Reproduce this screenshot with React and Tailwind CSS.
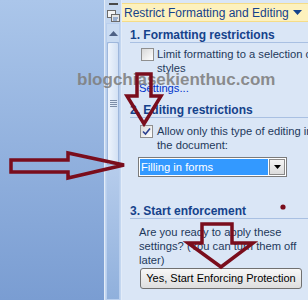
import React from 'react';

const font = { fontFamily: '"Liberation Sans", Arial, sans-serif' };

function Box({ checked }) {
  return (
    <div className="w-[13px] h-[13px] shrink-0 border border-[#8f8f8f] bg-gradient-to-br from-[#d8d8d8] to-white flex items-center justify-center">
      {checked && (
        <svg width="9" height="9" viewBox="0 0 9 9">
          <path d="M1 4.5 L3.5 7 L8 1.5" fill="none" stroke="#2a3f8f" strokeWidth="1.6" />
        </svg>
      )}
    </div>
  );
}

function Heading({ children }) {
  return (
    <div className="h-[15px] leading-[14px] border-b border-[#a9c0e2] text-[12px] font-bold text-[#15428b] whitespace-nowrap">
      {children}
    </div>
  );
}

function Scrollbar() {
  return (
    <div className="w-[18px] shrink-0 flex flex-col bg-[#c4d7f0] border-l border-[#e3ecf8] border-r border-[#7f9fcf]">
      <div className="h-[23px] flex flex-col items-center pt-[3px]">
        <div className="w-[9px] h-[2px] bg-[#4a4a4a]" />
        <svg width="13" height="12" viewBox="0 0 13 12" className="mt-[5px]">
          <rect x="0.5" y="0.5" width="8" height="7" fill="#f4f4f4" stroke="#6b6b6b" />
          <rect x="4.5" y="4.5" width="8" height="7" fill="#e6e6e6" stroke="#6b6b6b" />
          <path d="M6 8 L11 8 M6 10 L10 10" stroke="#4c78b8" />
        </svg>
      </div>
      <div className="flex-1 flex flex-col mx-[1px] bg-[#a8c2e6] border border-[#b9cfee]">
        <div className="h-[18px] flex items-center justify-center bg-[#c9dbf2]">
          <svg width="9" height="5" viewBox="0 0 9 5"><path d="M0 5 L4.5 0 L9 5 Z" fill="#4d6185" /></svg>
        </div>
        <div className="h-[123px] bg-gradient-to-r from-[#eef4fc] to-[#d3e1f4] border border-[#9eb7dc] rounded-[2px] flex flex-col items-center justify-center gap-[1px]">
          <div className="w-[7px] h-[1px] bg-[#7d8ea8]" />
          <div className="w-[7px] h-[1px] bg-[#7d8ea8]" />
          <div className="w-[7px] h-[1px] bg-[#7d8ea8]" />
          <div className="w-[7px] h-[1px] bg-[#7d8ea8]" />
        </div>
        <div className="flex-1 bg-gradient-to-b from-[#b7cdec] to-[#90b0dc]" />
      </div>
    </div>
  );
}

function Arrows() {
  const red = '#7a0d1c';
  return (
    <svg className="absolute inset-0 pointer-events-none" width="308" height="300" viewBox="0 0 308 300">
      <polygon points="137,74 151,74 151,96 161,96 144,124 127,96 137,96" fill="none" stroke={red} strokeWidth="3.5" strokeLinejoin="miter" />
      <polygon points="11,160 68,160 68,153 124,165 68,178 68,172 11,172" fill="none" stroke={red} strokeWidth="3.5" strokeLinejoin="miter" />
      <polygon points="202,224 232,224 232,243 253,243 221,267 188,243 202,243" fill="none" stroke={red} strokeWidth="3.5" strokeLinejoin="miter" />
      <circle cx="283" cy="207" r="2.6" fill={red} />
    </svg>
  );
}

export default function App() {
  return (
    <div className="relative w-[308px] h-[300px] overflow-hidden flex text-[#1e395b]" style={font}>
      <div className="w-[104px] shrink-0 bg-gradient-to-b from-[#abc6ea] to-[#7a9dd2]" />
      <Scrollbar />

      <div className="flex-1 bg-[#dae6f6] flex flex-col">
        <div className="mt-[3px] h-[19px] bg-[#fdf1bd] border-y border-[#f5dc88] flex items-center pl-[2px]">
          <div className="w-[166px] overflow-hidden whitespace-nowrap text-[12px] text-[#15428b]">
            Restrict Formatting and Editing
          </div>
          <svg width="9" height="5" viewBox="0 0 9 5" className="ml-[3px]"><path d="M0 0 L9 0 L4.5 5 Z" fill="#15428b" /></svg>
        </div>

        <div className="pl-[8px] flex flex-col">
          <div className="mt-[6px]"><Heading>1. Formatting restrictions</Heading></div>
          <div className="mt-[5px] ml-[11px] flex gap-[3px] text-[11.2px] leading-[14px] whitespace-nowrap">
            <Box />
            <div className="-mt-[1px]">Limit formatting to a selection of<br />styles</div>
          </div>
          <div className="mt-[6px] ml-[9px] text-[11.2px] leading-[14px] text-[#0033cc]">Settings...</div>

          <div className="mt-[8px]"><Heading>2. Editing restrictions</Heading></div>
          <div className="mt-[7px] ml-[10px] flex gap-[4px] text-[11.2px] leading-[14px] whitespace-nowrap">
            <Box checked />
            <div className="-mt-[1px]">Allow only this type of editing in<br />the document:</div>
          </div>
          <div className="mt-[5px] ml-[8px] w-[149px] h-[20px] bg-white border border-[#7b7b7b] flex items-center p-[1px]">
            <div className="flex-1 h-full bg-[#3399ff] text-white text-[11.2px] leading-[16px] pl-[1px] whitespace-nowrap">Filling in forms</div>
            <div className="w-[16px] h-full ml-[1px] bg-gradient-to-b from-[#f4f4f4] to-[#dcdcdc] border border-[#8a8a8a] flex items-center justify-center">
              <svg width="7" height="4" viewBox="0 0 7 4"><path d="M0 0 L7 0 L3.5 4 Z" fill="#000" /></svg>
            </div>
          </div>

          <div className="mt-[27px]"><Heading>3. Start enforcement</Heading></div>
          <div className="mt-[6px] ml-[9px] text-[11.2px] leading-[14px] whitespace-nowrap">
            Are you ready to apply these<br />settings? (You can turn them off<br />later)
          </div>
          <div className="mt-[1px] ml-[10px] w-[162px] h-[21px] rounded-[3px] border border-[#707070] bg-gradient-to-b from-[#f7f7f7] to-[#dedede] flex items-center justify-center text-[11px] text-black whitespace-nowrap">
            Yes, Start Enforcing Protection
          </div>
        </div>
      </div>

      <div className="absolute left-[77px] top-[67px] text-[17px] font-bold text-[#7f7f7f]/90 whitespace-nowrap pointer-events-none">
        blogchiasekienthuc.com
      </div>
      <Arrows />
    </div>
  );
}
